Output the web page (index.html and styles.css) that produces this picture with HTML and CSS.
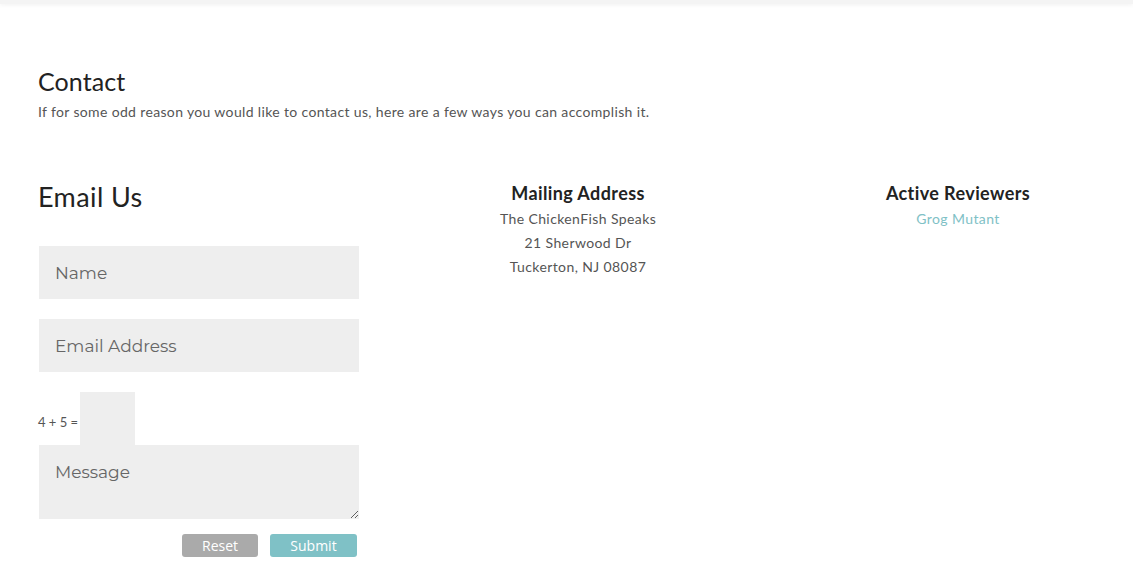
FILE: index.html
```html
<!DOCTYPE html>
<html>
<head>
<meta charset="utf-8">
<link rel="stylesheet" href="styles.css">
</head>
<body>
<div class="topbar"></div>
<main class="page">
  <section class="intro">
    <h1 class="title">Contact</h1>
    <p class="lead">If for some odd reason you would like to contact us, here are a few ways you can accomplish it.</p>
  </section>
  <section class="cols">
    <div class="col col-form">
      <h2 class="form-title">Email Us</h2>
      <form class="form">
        <input class="field" type="text" placeholder="Name">
        <input class="field" type="text" placeholder="Email Address">
        <div class="captcha">
          <span class="captcha-label">4 + 5 =</span>
          <input class="captcha-input" type="text">
        </div>
        <textarea class="field area" placeholder="Message"></textarea>
        <div class="actions">
          <button class="btn btn-reset" type="button">Reset</button>
          <button class="btn btn-submit" type="button">Submit</button>
        </div>
      </form>
    </div>
    <div class="col col-center">
      <h3 class="col-title">Mailing Address</h3>
      <p class="addr">The ChickenFish Speaks<br>21 Sherwood Dr<br>Tuckerton, NJ 08087</p>
    </div>
    <div class="col col-center">
      <h3 class="col-title">Active Reviewers</h3>
      <p class="addr"><a class="link" href="#">Grog Mutant</a></p>
    </div>
  </section>
</main>
</body>
</html>
```
FILE: styles.css
```css
html, body {
  margin: 0;
  padding: 0;
  background: #fff;
  overflow: hidden;
}
body {
  font-family: "Lato", "Noto Sans", sans-serif;
  color: #555;
  width: 1133px;
  height: 563px;
}
.topbar {
  height: 4px;
  background: #f4f4f4;
  box-shadow: 0 1px 4px rgba(0,0,0,0.06);
}
.page {
  padding: 0 0 0 38px;
}
.intro {
  padding-top: 62px;
}
.title {
  margin: 0;
  font-family: "Lato", sans-serif;
  font-weight: 400;
  font-size: 25px;
  line-height: 30px;
  color: #222;
  letter-spacing: 0.1px;
}
.lead {
  margin: 6px 0 0;
  font-size: 14px;
  line-height: 20px;
  color: #555;
  letter-spacing: 0.35px;
}
.cols {
  display: grid;
  grid-template-columns: 350px 380px 380px;
  margin-top: 55px;
}
.form-title {
  margin: 0;
  font-weight: 400;
  font-size: 27px;
  line-height: 40px;
  color: #222;
  letter-spacing: 0.4px;
}
.form {
  display: flex;
  flex-direction: column;
  width: 320px;
  margin-top: 29px;
  padding-left: 1px;
}
.field {
  box-sizing: border-box;
  width: 320px;
  height: 53px;
  border: 0;
  background: #eee;
  padding: 0 16px;
  font-family: "Montserrat", "Noto Sans", sans-serif;
  font-size: 17px;
  color: #666;
  margin: 0 0 20px;
  outline: none;
}
.field::placeholder {
  color: #666;
}
.captcha {
  display: flex;
  align-items: center;
  height: 53px;
  margin-left: -1px;
}
.captcha-label {
  font-size: 13px;
  color: #555;
  margin-top: 6px;
  width: 42px;
}
.captcha-input {
  box-sizing: border-box;
  width: 55px;
  height: 53px;
  border: 0;
  background: #eee;
  outline: none;
}
.area {
  height: 74px;
  padding-top: 17px;
  resize: vertical;
  margin-bottom: 15px;
}
.actions {
  display: flex;
  justify-content: flex-end;
  gap: 12px;
  padding-right: 2px;
}
.btn {
  height: 23px;
  border: 0;
  border-radius: 3px;
  color: #fff;
  font-family: "Open Sans", sans-serif;
  font-size: 14px;
  padding: 0;
}
.btn-reset {
  width: 76px;
  background: #aaa;
}
.btn-submit {
  width: 87px;
  background: #7fc1c6;
}
.col-center {
  text-align: center;
}
.col-title {
  margin: 2px 0 0;
  font-weight: 700;
  font-size: 18px;
  line-height: 28px;
  color: #222;
  letter-spacing: 0.4px;
}
.addr {
  margin: 0;
  font-size: 14px;
  line-height: 24px;
  color: #555;
  letter-spacing: 0.4px;
}
.link {
  color: #7fc1c6;
  text-decoration: none;
}
```
